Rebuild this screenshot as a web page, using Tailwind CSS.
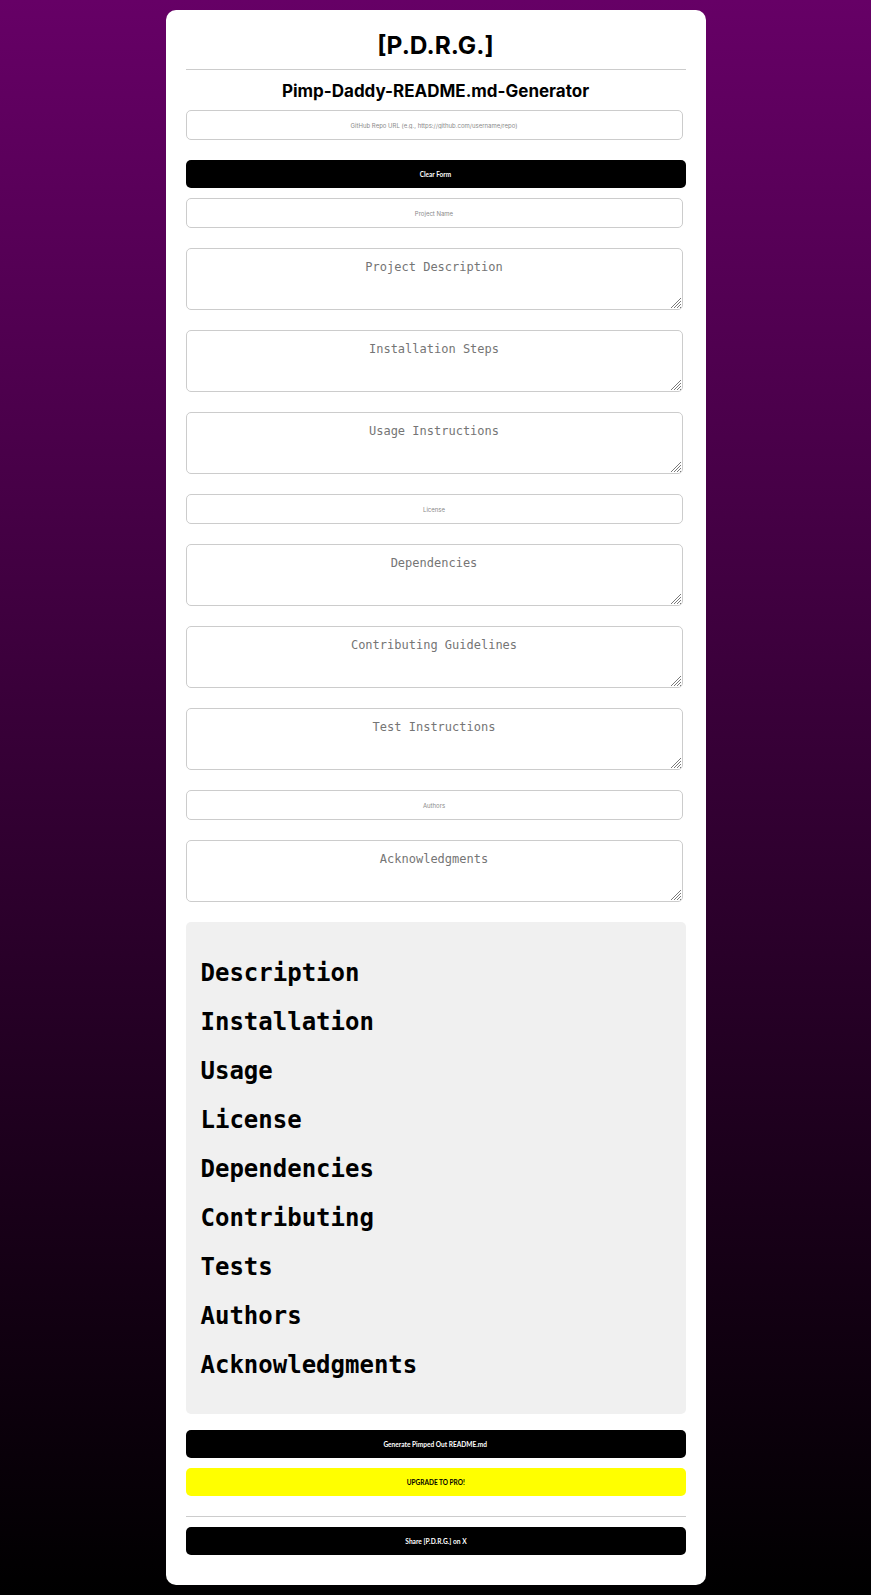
<!DOCTYPE html>
<html lang="en">
<head>
<meta charset="utf-8">
<title>P.D.R.G.</title>
<script src="https://cdn.jsdelivr.net/npm/@tailwindcss/browser@4"></script>
</head>
<body class="m-0 h-[1595px] overflow-hidden bg-[linear-gradient(to_bottom,#660066,#000000)] pt-[10px] font-['Inter',sans-serif]">
<main class="mx-auto w-[540px] rounded-[10px] bg-white px-5 pt-5 pb-[30px] text-center">
  <h1 class="text-[24.5px] leading-[30px] font-bold text-black">[P.D.R.G.]</h1>
  <hr class="mt-[9px] border-0 border-t border-[#cccccc]">
  <h2 class="mt-[11px] mb-[8px] text-[17px] leading-[21px] font-bold text-black">Pimp-Daddy-README.md-Generator</h2>
  <form>
    <input class="mb-5 block h-[30px] w-[497px] rounded-[5px] border border-[#cccccc] bg-white text-center font-['Inter',sans-serif] text-[6px] placeholder:text-[#8a8a8a]" placeholder="GitHub Repo URL (e.g., https://github.com/username/repo)">
    <button type="button" class="mb-[10px] block h-[28px] w-full rounded-[5px] bg-black pb-px font-['Lato',sans-serif] text-[8px] font-bold text-white"><span class="inline-block scale-x-[0.81]">Clear Form</span></button>
    <input class="mb-5 block h-[30px] w-[497px] rounded-[5px] border border-[#cccccc] bg-white text-center font-['Inter',sans-serif] text-[6px] placeholder:text-[#8a8a8a]" placeholder="Project Name">

    <div class="relative mb-5 w-[497px]">
      <textarea class="block h-[62px] w-full resize-none rounded-[5px] border border-[#cccccc] bg-white px-2.5 pt-[9px] pb-2.5 text-center font-['DejaVu_Sans_Mono',monospace] text-[12px] placeholder:text-[#757575]" placeholder="Project Description"></textarea>
      <svg class="pointer-events-none absolute right-[2px] bottom-[2px] h-[10px] w-[10px]" viewBox="0 0 10 10" stroke="#7a7a7a" stroke-width="1"><path d="M0 10 10 0M3 10 10 3M6 10 10 6M9 10 10 9"/></svg>
    </div>
    <div class="relative mb-5 w-[497px]">
      <textarea class="block h-[62px] w-full resize-none rounded-[5px] border border-[#cccccc] bg-white px-2.5 pt-[9px] pb-2.5 text-center font-['DejaVu_Sans_Mono',monospace] text-[12px] placeholder:text-[#757575]" placeholder="Installation Steps"></textarea>
      <svg class="pointer-events-none absolute right-[2px] bottom-[2px] h-[10px] w-[10px]" viewBox="0 0 10 10" stroke="#7a7a7a" stroke-width="1"><path d="M0 10 10 0M3 10 10 3M6 10 10 6M9 10 10 9"/></svg>
    </div>
    <div class="relative mb-5 w-[497px]">
      <textarea class="block h-[62px] w-full resize-none rounded-[5px] border border-[#cccccc] bg-white px-2.5 pt-[9px] pb-2.5 text-center font-['DejaVu_Sans_Mono',monospace] text-[12px] placeholder:text-[#757575]" placeholder="Usage Instructions"></textarea>
      <svg class="pointer-events-none absolute right-[2px] bottom-[2px] h-[10px] w-[10px]" viewBox="0 0 10 10" stroke="#7a7a7a" stroke-width="1"><path d="M0 10 10 0M3 10 10 3M6 10 10 6M9 10 10 9"/></svg>
    </div>
    <input class="mb-5 block h-[30px] w-[497px] rounded-[5px] border border-[#cccccc] bg-white text-center font-['Inter',sans-serif] text-[6px] placeholder:text-[#8a8a8a]" placeholder="License">
    <div class="relative mb-5 w-[497px]">
      <textarea class="block h-[62px] w-full resize-none rounded-[5px] border border-[#cccccc] bg-white px-2.5 pt-[9px] pb-2.5 text-center font-['DejaVu_Sans_Mono',monospace] text-[12px] placeholder:text-[#757575]" placeholder="Dependencies"></textarea>
      <svg class="pointer-events-none absolute right-[2px] bottom-[2px] h-[10px] w-[10px]" viewBox="0 0 10 10" stroke="#7a7a7a" stroke-width="1"><path d="M0 10 10 0M3 10 10 3M6 10 10 6M9 10 10 9"/></svg>
    </div>
    <div class="relative mb-5 w-[497px]">
      <textarea class="block h-[62px] w-full resize-none rounded-[5px] border border-[#cccccc] bg-white px-2.5 pt-[9px] pb-2.5 text-center font-['DejaVu_Sans_Mono',monospace] text-[12px] placeholder:text-[#757575]" placeholder="Contributing Guidelines"></textarea>
      <svg class="pointer-events-none absolute right-[2px] bottom-[2px] h-[10px] w-[10px]" viewBox="0 0 10 10" stroke="#7a7a7a" stroke-width="1"><path d="M0 10 10 0M3 10 10 3M6 10 10 6M9 10 10 9"/></svg>
    </div>
    <div class="relative mb-5 w-[497px]">
      <textarea class="block h-[62px] w-full resize-none rounded-[5px] border border-[#cccccc] bg-white px-2.5 pt-[9px] pb-2.5 text-center font-['DejaVu_Sans_Mono',monospace] text-[12px] placeholder:text-[#757575]" placeholder="Test Instructions"></textarea>
      <svg class="pointer-events-none absolute right-[2px] bottom-[2px] h-[10px] w-[10px]" viewBox="0 0 10 10" stroke="#7a7a7a" stroke-width="1"><path d="M0 10 10 0M3 10 10 3M6 10 10 6M9 10 10 9"/></svg>
    </div>
    <input class="mb-5 block h-[30px] w-[497px] rounded-[5px] border border-[#cccccc] bg-white text-center font-['Inter',sans-serif] text-[6px] placeholder:text-[#8a8a8a]" placeholder="Authors">
    <div class="relative mb-5 w-[497px]">
      <textarea class="block h-[62px] w-full resize-none rounded-[5px] border border-[#cccccc] bg-white px-2.5 pt-[9px] pb-2.5 text-center font-['DejaVu_Sans_Mono',monospace] text-[12px] placeholder:text-[#757575]" placeholder="Acknowledgments"></textarea>
      <svg class="pointer-events-none absolute right-[2px] bottom-[2px] h-[10px] w-[10px]" viewBox="0 0 10 10" stroke="#7a7a7a" stroke-width="1"><path d="M0 10 10 0M3 10 10 3M6 10 10 6M9 10 10 9"/></svg>
    </div>
  </form>
  <section class="flex h-[492px] flex-col justify-center gap-[21px] rounded-[5px] bg-[#f0f0f0] px-[15px] pt-[17px] pb-[15px] text-left font-['DejaVu_Sans_Mono',monospace] text-[24px] leading-[28px] font-bold text-black">
    <h3>Description</h3>
    <h3>Installation</h3>
    <h3>Usage</h3>
    <h3>License</h3>
    <h3>Dependencies</h3>
    <h3>Contributing</h3>
    <h3>Tests</h3>
    <h3>Authors</h3>
    <h3>Acknowledgments</h3>
  </section>
  <button type="button" class="mt-4 block h-[28px] w-full rounded-[5px] bg-black pb-px font-['Lato',sans-serif] text-[8px] font-bold text-white"><span class="inline-block scale-x-[0.82]">Generate Pimped Out README.md</span></button>
  <button type="button" class="mt-[10px] block h-[28px] w-full rounded-[5px] bg-[#ffff00] pb-px font-['Lato',sans-serif] text-[8px] font-bold text-black"><span class="inline-block scale-x-[0.81]">UPGRADE TO PRO!</span></button>
  <hr class="mt-5 border-0 border-t border-[#cccccc]">
  <button type="button" class="mt-[10px] block h-[28px] w-full rounded-[5px] bg-black pb-px font-['Lato',sans-serif] text-[8px] font-bold text-white"><span class="inline-block scale-x-[0.83]">Share [P.D.R.G.] on X</span></button>
</main>
</body>
</html>
